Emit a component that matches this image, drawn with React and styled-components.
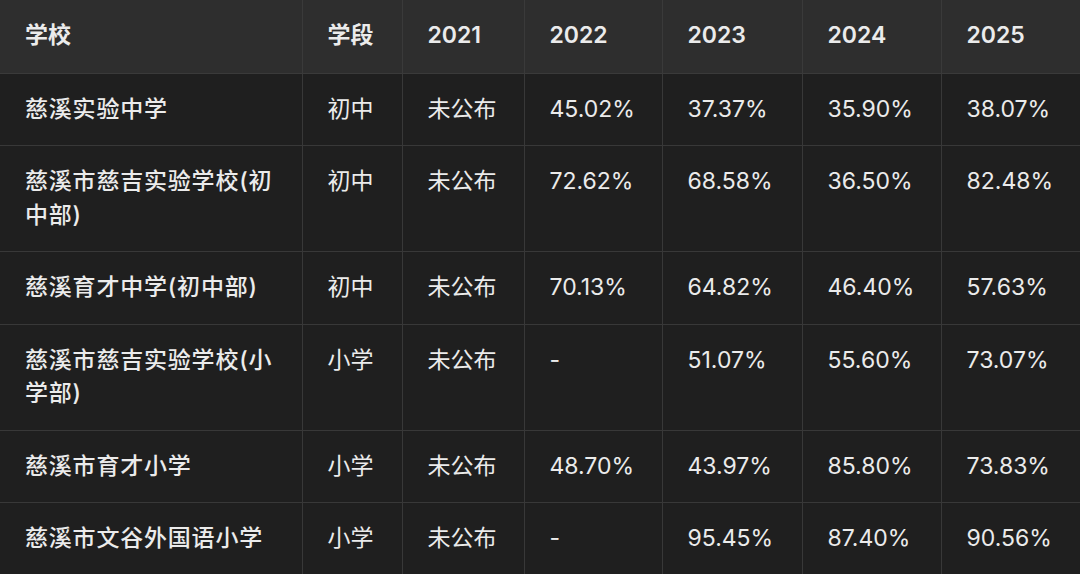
import React from "react";
import styled, { createGlobalStyle } from "styled-components";

const Global = createGlobalStyle`
  html, body { margin: 0; padding: 0; background: #1f1f1f; }
  body { overflow: hidden; }
  #root { width: 1080px; height: 574px; overflow: hidden; }
`;

const Table = styled.table`
  width: 1080px;
  border-collapse: collapse;
  table-layout: fixed;
  font-family: "Inter", "Noto Sans CJK SC", sans-serif;
  font-size: 23px;
  line-height: 33.5px;
  color: #ebebeb;
`;

const Head = styled.th`
  background: #2e2e2e;
  font-weight: 600;
  text-align: left;
  padding: 19px 25px 20px;
  border: 1px solid #3a3a3a;
  border-top: none;
  &:first-child { border-left: none; }
  &:last-child { border-right: none; }
`;

const Cell = styled.td`
  background: #1f1f1f;
  font-weight: ${(p) => (p.$name ? 500 : 400)};
  letter-spacing: ${(p) => (p.$name ? "0.8px" : "0")};
  text-align: left;
  vertical-align: top;
  padding: 19px 25px;
  border: 1px solid #383838;
  word-break: break-all;
  &:first-child { border-left: none; }
  &:last-child { border-right: none; }
`;

const widths = [302, 100, 122, 138, 140, 139, 139];
const headers = ["学校", "学段", "2021", "2022", "2023", "2024", "2025"];

const rows = [
  ["慈溪实验中学", "初中", "未公布", "45.02%", "37.37%", "35.90%", "38.07%"],
  ["慈溪市慈吉实验学校(初中部)", "初中", "未公布", "72.62%", "68.58%", "36.50%", "82.48%"],
  ["慈溪育才中学(初中部)", "初中", "未公布", "70.13%", "64.82%", "46.40%", "57.63%"],
  ["慈溪市慈吉实验学校(小学部)", "小学", "未公布", "-", "51.07%", "55.60%", "73.07%"],
  ["慈溪市育才小学", "小学", "未公布", "48.70%", "43.97%", "85.80%", "73.83%"],
  ["慈溪市文谷外国语小学", "小学", "未公布", "-", "95.45%", "87.40%", "90.56%"],
];

export default function App() {
  return (
    <>
      <Global />
      <Table>
        <colgroup>
          {widths.map((w, i) => (
            <col key={i} style={{ width: w }} />
          ))}
        </colgroup>
        <thead>
          <tr>
            {headers.map((h) => (
              <Head key={h}>{h}</Head>
            ))}
          </tr>
        </thead>
        <tbody>
          {rows.map((r, i) => (
            <tr key={i}>
              {r.map((c, j) => (
                <Cell key={j} $name={j === 0}>
                  {c}
                </Cell>
              ))}
            </tr>
          ))}
        </tbody>
      </Table>
    </>
  );
}
